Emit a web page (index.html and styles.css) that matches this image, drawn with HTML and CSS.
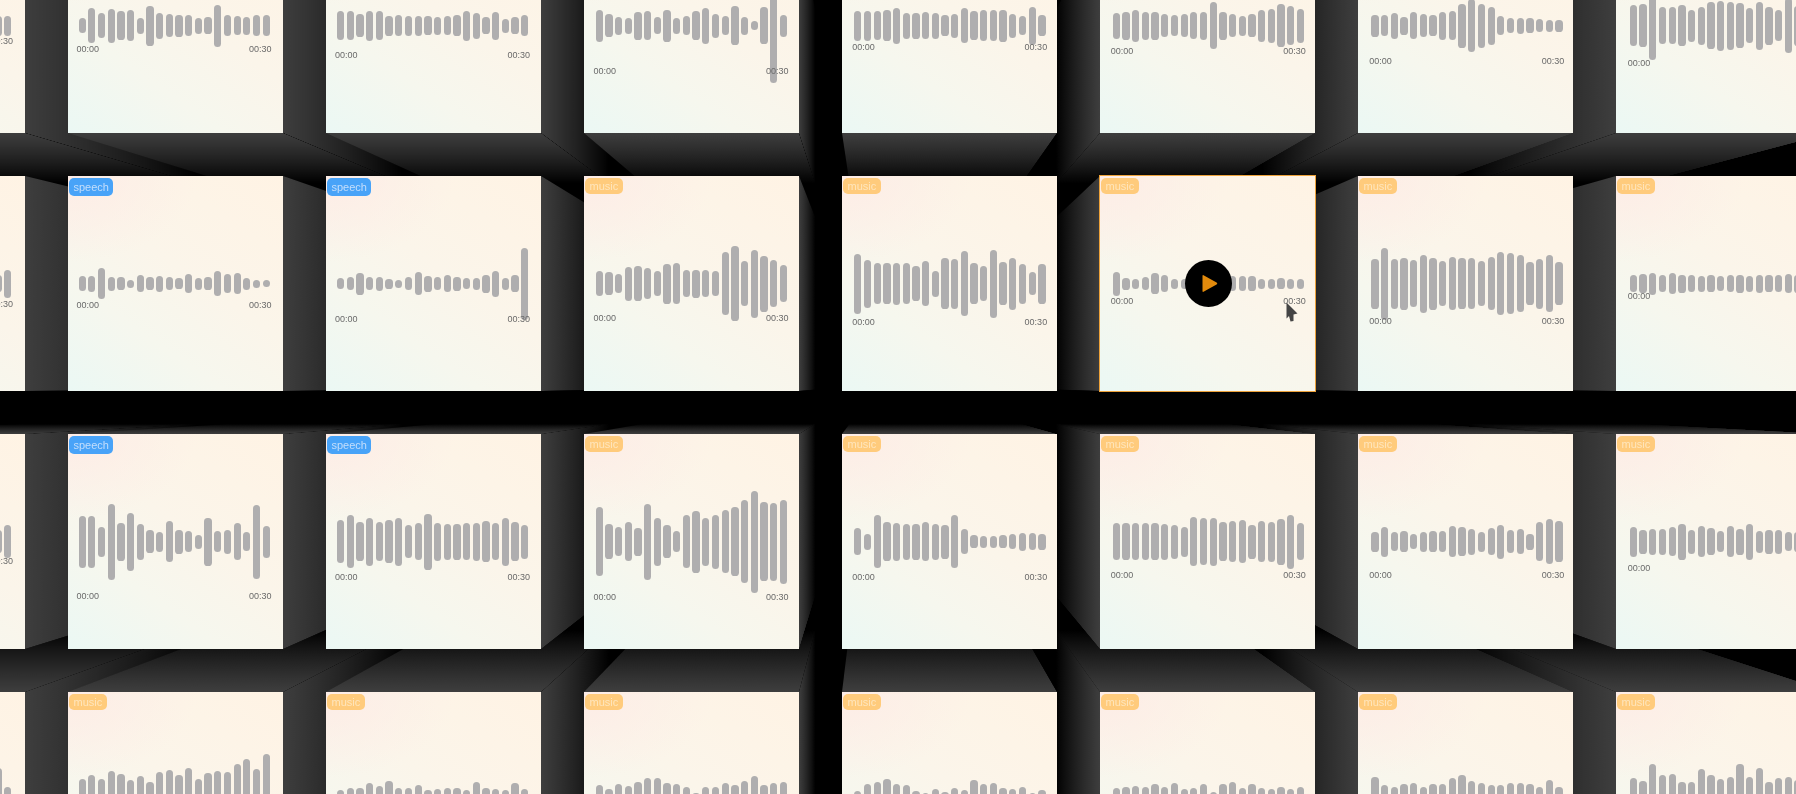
FILE: index.html
```html
<!DOCTYPE html>
<html lang="en">
<head>
<meta charset="utf-8">
<title>Audio wall</title>
<link rel="stylesheet" href="styles.css">
</head>
<body>
<main class="scene">
  <div class="wall" id="wall"></div>
</main>
<script src="app.js"></script>
</body>
</html>
```

FILE: styles.css
```css
html, body { margin: 0; height: 100%; background: #000; overflow: hidden; }
body { font-family: "Liberation Sans", Arial, sans-serif; }

.scene {
  width: 1796px;
  height: 794px;
  overflow: hidden;
  perspective: 800px;
  perspective-origin: 880px 384px;
}
.wall {
  display: grid;
  grid-template-columns: repeat(8, 215px);
  grid-auto-rows: 215px;
  gap: 43px;
  margin: -82px 0 0 -190px;
  width: 2021px;
  transform-style: preserve-3d;
}
.cube { position: relative; width: 215px; height: 215px; transform-style: preserve-3d; }
.face { position: absolute; }
.face-right { left: 100%; top: 0; width: 200px; height: 100%; transform-origin: left center; transform: rotateY(90deg); background: linear-gradient(to right, #3e3e3e, #000); }
.face-left { right: 100%; top: 0; width: 200px; height: 100%; transform-origin: right center; transform: rotateY(-90deg); background: linear-gradient(to left, #3e3e3e, #000); }
.face-bottom { top: 100%; left: 0; height: 200px; width: 100%; transform-origin: center top; transform: rotateX(-90deg); background: linear-gradient(to bottom, #3e3e3e, #000); }
.face-top { bottom: 100%; left: 0; height: 200px; width: 100%; transform-origin: center bottom; transform: rotateX(90deg); background: linear-gradient(to top, #3e3e3e, #000); }

.tile {
  position: relative;
  box-sizing: border-box;
  width: 215px;
  height: 215px;
  padding-top: 107.5px;
  background:
    radial-gradient(ellipse 60% 40% at 0 0, #fdece6 0%, rgba(253,236,230,0) 100%),
    linear-gradient(35deg, #ebf8f4 0%, #f6f7ee 30%, #fbf5ea 55%, #fff3e4 100%);
}
.tile-active { outline: 1px solid #eda23a; }

.tag {
  position: absolute;
  left: 1px;
  top: 2px;
  border-radius: 5px;
  font-size: 11px;
  letter-spacing: 0;
}
.tag-music { background: #ffcb7c; color: #ffe6bd; padding: 1.5px 4.5px; line-height: 12.5px; }
.tag-speech { background: #48a3f8; color: #c4defb; padding: 3px 4.5px; line-height: 12px; }

.player { width: 195px; margin-left: calc(8.5px + var(--shift)); }
.wave { display: flex; justify-content: space-between; align-items: center; width: 191.5px; height: 0; margin-left: 2px; }
.bar { flex: none; width: 7.3px; border-radius: 3.6px; background: #afaeaf; }
.times { display: flex; justify-content: space-between; font-size: 9px; line-height: 8px; color: #6a6a6a; }

.play {
  position: absolute;
  left: 85px;
  top: 83.5px;
  width: 47px;
  height: 47px;
  border-radius: 50%;
  background: #000;
  display: flex;
  align-items: center;
  justify-content: center;
}
.play svg { width: 16px; height: 19px; margin-left: 2px; }
.cursor { position: absolute; left: 186px; top: 126px; width: 12px; height: 20px; }
```

FILE: app.js
```js
var F = [15,15,15,15,15,15,15,15,15,15,15,15,15,15,15,15,15,15];
var rows = [
  [
    {off:15.5, bars:F.concat([20,20])},
    {off:23, bars:[15,35,25,34,29,31,16,40,26,23,22,21,16,17,42,21,19,18,21,21]},
    {off:29.5, bars:[29,29,23,30,29,20,21,20,20,19,18,19,21,30,26,17,28,14,17,21]},
    {off:45.5, bars:[32,23,18,16,28,29,17,32,16,19,29,36,24,19,39,18,9,37,115,22]},
    {off:21.5, bars:[30,30,29,31,36,26,26,27,26,21,24,35,29,31,31,32,24,19,38,21]},
    {off:25.5, bars:[26,28,32,28,28,23,21,23,27,28,47,28,23,20,23,32,34,43,39,34]},
    {off:35, bars:[22,21,26,18,27,23,21,28,29,44,53,44,38,19,15,16,15,13,12,12]},
    {off:37, bars:[41,43,68,37,37,41,32,38,47,50,48,45,35,48,38,31,55,40,40,40]}
  ],
  [
    {off:20, bars:F.concat([17,28])},
    {off:21.5, bars:[15,16,31,14,13,8,17,13,16,13,11,19,12,13,25,19,21,12,8,7]},
    {off:35, bars:[11,13,22,13,14,10,8,13,23,16,13,17,14,11,12,18,26,12,17,72]},
    {off:34, bars:[25,23,19,34,35,31,25,40,41,27,28,27,25,63,75,45,68,56,47,37]},
    {off:38, bars:[60,48,41,41,42,41,35,45,26,51,50,65,41,35,68,43,52,40,23,40]},
    {off:17, active:true, bars:[24,12,10,13,21,17,10,10,10,12,14,12,15,15,15,10,10,11,10,10]},
    {off:37, bars:[50,72,50,52,47,58,52,45,53,51,51,45,53,63,61,57,43,50,57,43]},
    {off:12, bars:[17,19,22,17,21,18,17,16,17,15,17,18,16,18,17,17,19,18,18,18]}
  ],
  [
    {off:19, bars:F.concat([23,33])},
    {off:54.6, bars:[52,52,30,76,38,58,36,23,20,41,24,21,14,48,21,24,37,19,74,32]},
    {off:35.3, bars:[43,53,39,48,39,43,48,33,37,56,38,36,36,37,38,41,37,48,39,34]},
    {off:55, bars:[69,35,29,39,28,76,48,33,21,53,62,48,54,63,69,83,102,79,78,84]},
    {off:35.7, bars:[27,16,53,39,38,36,36,39,36,34,53,25,13,12,12,13,15,18,17,16]},
    {off:33, bars:[37,37,37,37,37,36,34,30,49,47,48,39,41,43,34,41,40,46,54,37]},
    {off:33, bars:[20,30,19,21,15,20,21,21,31,29,26,20,27,34,23,25,16,39,45,41]},
    {off:26.6, bars:[30,24,26,26,29,36,24,31,27,21,31,26,36,22,24,24,19,20,20,20]}
  ],
  [
    {off:60, bars:F.concat([64,26])},
    {off:60, bars:[41,50,41,58,51,39,48,36,56,59,50,63,41,54,58,56,72,82,61,91]},
    {off:60, bars:[19,24,24,34,28,38,24,24,29,20,21,24,24,20,36,24,21,19,33,22]},
    {off:60, bars:[30,22,32,28,36,44,43,34,31,26,14,26,26,33,30,38,48,30,34,36]},
    {off:60, bars:[17,32,36,41,31,29,18,14,22,16,24,19,40,32,33,24,21,26,14,19]},
    {off:60, bars:[23,26,28,26,31,26,34,22,23,32,16,31,36,24,31,24,22,26,22,26]},
    {off:60, bars:[46,30,26,32,34,26,31,31,43,50,38,34,30,30,34,34,32,26,39,26]},
    {off:60, bars:[44,38,72,49,51,36,36,61,49,41,46,71,46,63,36,43,46,40,40,40]}
  ]
];

function el(tag, cls, text) {
  var n = document.createElement(tag);
  if (cls) n.className = cls;
  if (text) n.textContent = text;
  return n;
}

var wall = document.getElementById('wall');
var vpX = 880, vpY = 384;

rows.forEach(function (row, r) {
  row.forEach(function (data, c) {
    var cube = el('div', 'cube');
    var left = -190 + c * 258, top = -82 + r * 258;
    if (left + 215 < vpX) cube.appendChild(el('div', 'face face-right'));
    if (left > vpX) cube.appendChild(el('div', 'face face-left'));
    if (top + 215 < vpY) cube.appendChild(el('div', 'face face-bottom'));
    if (top > vpY) cube.appendChild(el('div', 'face face-top'));

    var tile = el('article', 'tile' + (data.active ? ' tile-active' : ''));
    var speech = (r === 1 || r === 2) && (c === 1 || c === 2);
    tile.appendChild(el('span', 'tag ' + (speech ? 'tag-speech' : 'tag-music'), speech ? 'speech' : 'music'));

    var player = el('div', 'player');
    player.style.setProperty('--shift', ((c - 1) * 0.55) + 'px');
    var wave = el('div', 'wave');
    data.bars.forEach(function (h) {
      var b = el('span', 'bar');
      b.style.height = h + 'px';
      wave.appendChild(b);
    });
    player.appendChild(wave);
    var times = el('div', 'times');
    times.style.marginTop = (data.off - 4) + 'px';
    times.appendChild(el('span', '', '00:00'));
    times.appendChild(el('span', '', '00:30'));
    player.appendChild(times);
    tile.appendChild(player);

    if (data.active) {
      var play = el('div', 'play');
      play.innerHTML = '<svg viewBox="0 0 16 19"><path d="M1.5 1.2 L14.6 8.4 Q16 9.5 14.6 10.6 L1.5 17.8 Q0.5 18.2 0.5 17 V2 Q0.5 0.8 1.5 1.2 Z" fill="#e28a0c"/></svg>';
      tile.appendChild(play);
      var cur = el('div', 'cursor');
      cur.innerHTML = '<svg viewBox="0 0 12 20" width="12" height="20"><path d="M0.5 0.5 L11.5 11.5 L7.5 12.5 L7.5 19 L4.5 19.5 L3 14 L0.5 16.5 Z" fill="#444"/></svg>';
      tile.appendChild(cur);
    }
    cube.appendChild(tile);
    wall.appendChild(cube);
  });
});
```
